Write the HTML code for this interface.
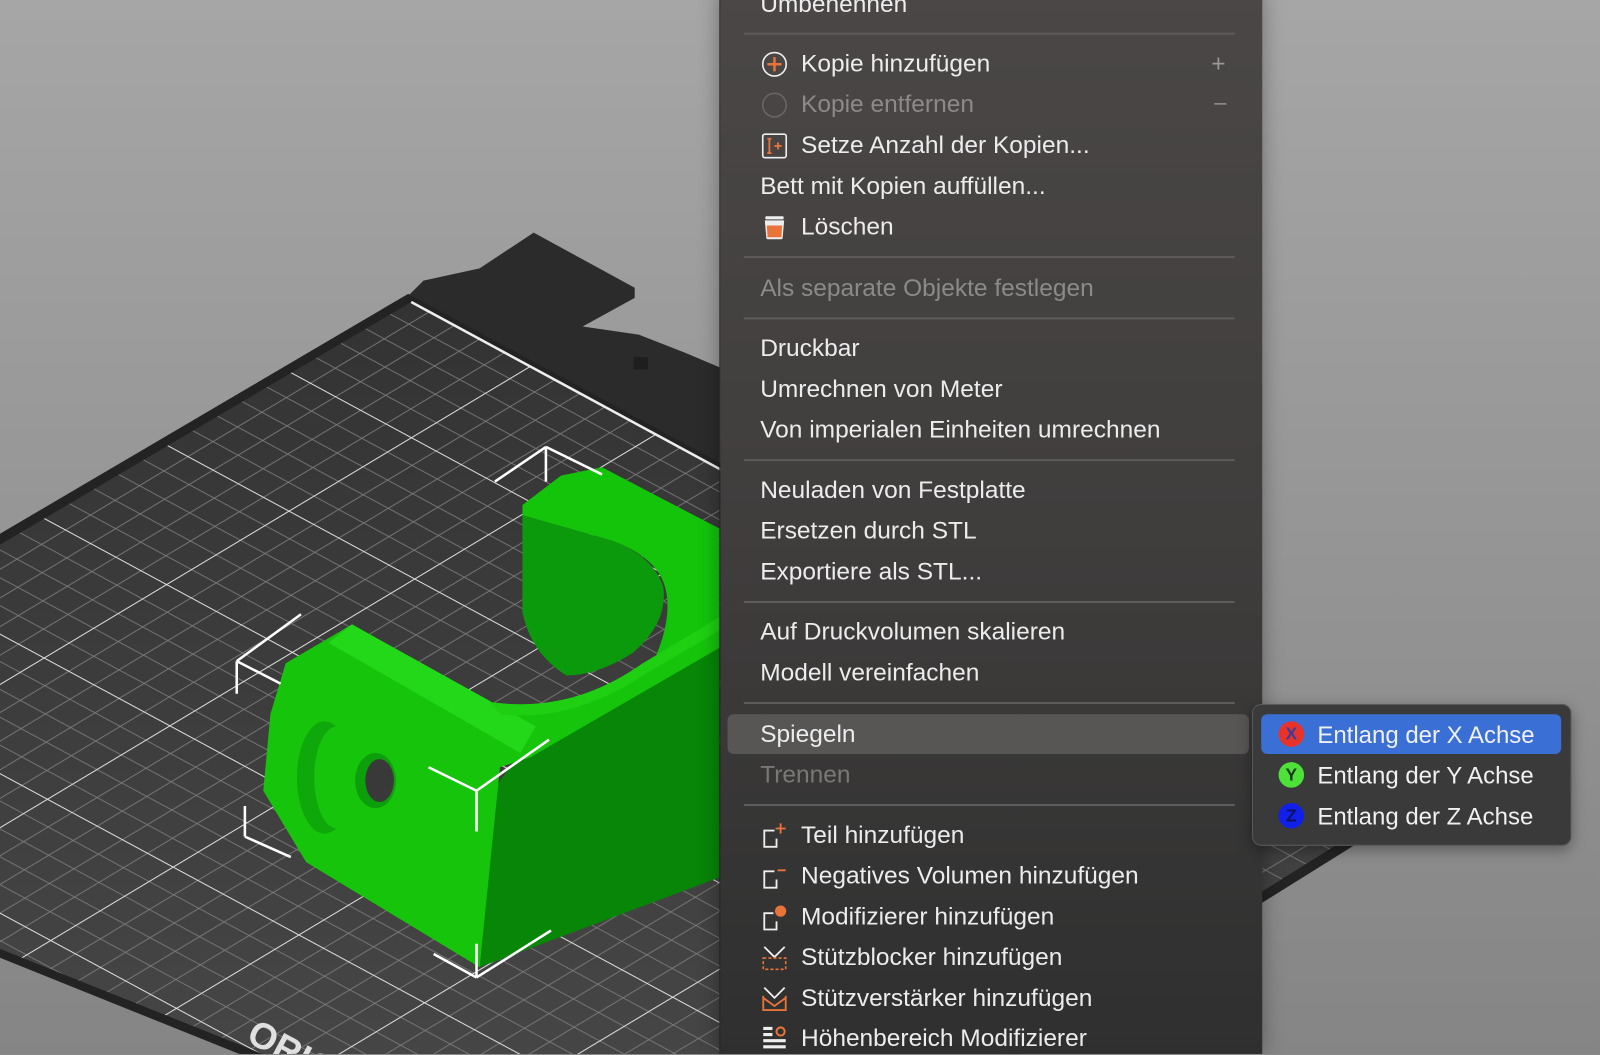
<!DOCTYPE html>
<html><head><meta charset="utf-8"><style>
html,body{margin:0;padding:0;width:1600px;height:1055px;overflow:hidden;background:#8a8a8a;}
#s{position:absolute;left:0;top:0;width:1568px;height:1033px;overflow:hidden;transform:scale(1.0204,1.0203);transform-origin:0 0;font-family:"Liberation Sans",sans-serif;}
.menu{position:absolute;left:705px;top:-10px;width:531px;height:1043px;background:linear-gradient(#4a4746,#403e3d 50%,#2f2f2f);border-left:1px solid #222;box-shadow:0 0 20px rgba(0,0,0,.35);}
.it{position:absolute;left:745px;height:40px;line-height:40px;font-size:24px;color:#ececec;white-space:nowrap;}
.it.i{left:785px}
.dis{color:#8c8a89}
.sep{position:absolute;left:729px;width:481px;height:2px;background:#5e5c5b;}
.ic{position:absolute;left:746px;width:26px;height:26px;}
.sub{position:absolute;left:1227px;top:690px;width:311px;height:137px;background:#3b3a3a;border:1px solid #5a5858;border-radius:9px;box-shadow:0 4px 14px rgba(0,0,0,.35);}
.si{position:absolute;left:1291px;height:40px;line-height:40px;font-size:23.5px;color:#f0f0f0;white-space:nowrap;}
.dot{position:absolute;left:1253px;width:25px;height:25px;border-radius:50%;text-align:center;line-height:25px;font-size:17px;font-weight:bold;}
</style></head><body><div id="s">
<svg width="1568" height="1033" style="position:absolute;left:0;top:0">
<defs>
<linearGradient id="bg" x1="0" y1="0" x2="0" y2="1"><stop offset="0" stop-color="#a6a6a6"/><stop offset="1" stop-color="#858585"/></linearGradient>
<linearGradient id="bed" x1="0" y1="0" x2="0" y2="1"><stop offset="0" stop-color="#333"/><stop offset="1" stop-color="#4a4a4a"/></linearGradient>
<pattern id="g" width="140" height="140" patternUnits="userSpaceOnUse" patternTransform="matrix(0.880,0.475,-0.857,0.514,400,290)">
<g stroke="#7c7c7c" stroke-width="1"><path d="M28 0V140M56 0V140M84 0V140M112 0V140M0 28H140M0 56H140M0 84H140M0 112H140"/></g>
<g stroke="#e6e6e6" stroke-width="2.2"><path d="M0 0V140M0 0H140"/></g>
</pattern>
<clipPath id="bc"><polygon points="403,296 1345,806 700,1210 -400,770"/></clipPath>
</defs>
<rect width="1568" height="1033" fill="url(#bg)"/>
<polygon points="415,275 470,263 523,228 622,282 622,292 571,320 626,328 672,346 705,360 705,480 400,290" fill="#2b2b2b"/>
<rect x="621" y="350" width="14" height="12" fill="#1e1e1e"/>
<polygon points="400,288 1360,808 700,1220 -420,770" fill="#232323"/>
<polygon points="403,296 1345,806 700,1210 -400,770" fill="url(#bed)"/>
<rect x="-500" y="200" width="2000" height="1100" fill="url(#g)" clip-path="url(#bc)"/>
<path d="M403,296 L1345,806" stroke="#eee" stroke-width="2.5"/>
<path d="M512,495 L550,466 L590,458 L705,518 L705,612 L640,650 Q662,600 650,570 Q640,545 600,530 L512,505Z" fill="#13c40b"/>
<path d="M512,505 L600,530 Q640,545 650,575 Q655,610 620,640 Q585,662 555,662 Q520,640 512,600Z" fill="#0b9a0b"/>
<path d="M515,730 L705,612 L705,860 L470,948 L480,780Z" fill="#078607"/>
<path d="M280,650 L345,612 L480,688 Q560,700 630,650 L705,612 L705,635 L520,742 L490,752 L470,948 L300,845 L258,775 L265,700Z" fill="#16c40c"/>
<path d="M322,630 L345,612 L525,712 L510,738 Z" fill="#22d818"/>
<path d="M480,688 Q560,700 630,650 L705,605 L705,618 L630,662 Q560,708 490,700Z" fill="#1fd012"/>
<ellipse cx="318" cy="762" rx="27" ry="55" fill="#0fa80b"/>
<ellipse cx="330" cy="762" rx="22" ry="50" fill="#16c40c"/>
<ellipse cx="368" cy="765" rx="20" ry="27" fill="#0d9e0b"/>
<ellipse cx="372" cy="765" rx="14" ry="21" fill="#393939"/>
<g stroke="#fff" stroke-width="2.5" fill="none">
<path d="M535,438V472M535,438L485,472M535,438L590,465"/>
<path d="M232,648V680M232,648L295,602M232,648L275,670"/>
<path d="M467,775V815M467,775L420,752M467,775L538,725"/>
<path d="M240,790V820M240,820L285,840"/>
<path d="M467,925V958M467,958L425,935M467,958L540,912"/>
</g>
<text x="240" y="1020" fill="#e0e0e0" font-family="Liberation Sans" font-size="36" font-weight="bold" transform="rotate(28 240 1020)">ORIGINAL</text>
</svg>
<div class="menu"></div>
<div class="it" style="top:-15px">Umbenennen</div>
<div class="sep" style="top:32px"></div>
<svg class="ic" style="top:50px" viewBox="0 0 26 26"><circle cx="13" cy="13" r="11.5" fill="none" stroke="#eee" stroke-width="1.6"/><path d="M13 6V20M6 13H20" stroke="#e8743a" stroke-width="2.4"/></svg>
<div class="it i" style="top:43px">Kopie hinzufügen</div>
<div class="it" style="top:43px;left:1187px;color:#999">+</div>
<svg class="ic" style="top:90px" viewBox="0 0 26 26"><circle cx="13" cy="13" r="11.5" fill="none" stroke="#666" stroke-width="1.6"/></svg>
<div class="it i dis" style="top:83px">Kopie entfernen</div>
<div class="it" style="top:83px;left:1189px;color:#888">−</div>
<svg class="ic" style="top:130px" viewBox="0 0 26 26"><rect x="1.5" y="1.5" width="23" height="23" rx="2" fill="none" stroke="#eee" stroke-width="1.6"/><path d="M6 6H10M8 6V20M6 20H10M13 13H20M16.5 9.5V16.5" stroke="#e8743a" stroke-width="1.8"/></svg>
<div class="it i" style="top:123px">Setze Anzahl der Kopien...</div>
<div class="it" style="top:163px">Bett mit Kopien auffüllen...</div>
<svg class="ic" style="top:210px" viewBox="0 0 26 26"><rect x="4" y="2" width="18" height="3" rx="1" fill="#eee"/><path d="M3.5 6H22.5L21 23Q21 24.5 19.5 24.5H6.5Q5 24.5 5 23Z" fill="#eee"/><path d="M5.5 11H20.5L19.8 22.5H6.2Z" fill="#e8743a"/></svg>
<div class="it i" style="top:203px">Löschen</div>
<div class="sep" style="top:251px"></div>
<div class="it dis" style="top:263px">Als separate Objekte festlegen</div>
<div class="sep" style="top:311px"></div>
<div class="it" style="top:322px">Druckbar</div>
<div class="it" style="top:362px">Umrechnen von Meter</div>
<div class="it" style="top:402px">Von imperialen Einheiten umrechnen</div>
<div class="sep" style="top:450px"></div>
<div class="it" style="top:461px">Neuladen von Festplatte</div>
<div class="it" style="top:501px">Ersetzen durch STL</div>
<div class="it" style="top:541px">Exportiere als STL...</div>
<div class="sep" style="top:589px"></div>
<div class="it" style="top:600px">Auf Druckvolumen skalieren</div>
<div class="it" style="top:640px">Modell vereinfachen</div>
<div class="sep" style="top:688px"></div>
<div style="position:absolute;left:713px;top:700px;width:511px;height:39px;border-radius:6px;background:#575655"></div>
<div class="it" style="top:700px">Spiegeln</div>
<div class="it dis" style="top:740px;color:#7a7877">Trennen</div>
<div class="sep" style="top:788px"></div>
<svg class="ic" style="top:806px" viewBox="0 0 26 26"><path d="M13 8H3V24H15V16" fill="none" stroke="#eee" stroke-width="1.8"/><path d="M19 1V11M14 6H24" stroke="#e8743a" stroke-width="1.8"/></svg>
<div class="it i" style="top:799px">Teil hinzufügen</div>
<svg class="ic" style="top:846px" viewBox="0 0 26 26"><path d="M13 8H3V24H15V16" fill="none" stroke="#eee" stroke-width="1.8"/><path d="M16 7H24" stroke="#e8743a" stroke-width="1.8"/></svg>
<div class="it i" style="top:839px">Negatives Volumen hinzufügen</div>
<svg class="ic" style="top:886px" viewBox="0 0 26 26"><path d="M12 9H3V25H15V17" fill="none" stroke="#eee" stroke-width="1.8"/><circle cx="19" cy="7" r="5.5" fill="#e8743a"/></svg>
<div class="it i" style="top:879px">Modifizierer hinzufügen</div>
<svg class="ic" style="top:926px" viewBox="0 0 26 26"><path d="M3 2L13 12L23 2" fill="none" stroke="#eee" stroke-width="1.8"/><rect x="2" y="13" width="22" height="11" fill="none" stroke="#e8743a" stroke-width="1.6" stroke-dasharray="3 2"/></svg>
<div class="it i" style="top:919px">Stützblocker hinzufügen</div>
<svg class="ic" style="top:966px" viewBox="0 0 26 26"><path d="M3 2L13 12L23 2" fill="none" stroke="#eee" stroke-width="1.8"/><path d="M2 10V24H24V10M2 12L13 20L24 12" fill="none" stroke="#e8743a" stroke-width="1.8"/></svg>
<div class="it i" style="top:959px">Stützverstärker hinzufügen</div>
<svg class="ic" style="top:1005px" viewBox="0 0 26 26"><path d="M2 3H11M2 9H11M2 15H24M2 21H24" stroke="#eee" stroke-width="3"/><circle cx="19" cy="6" r="4" fill="none" stroke="#e8743a" stroke-width="2"/></svg>
<div class="it i" style="top:998px;height:35px;line-height:40px;overflow:hidden">Höhenbereich Modifizierer</div>
<div class="sub"></div>
<div style="position:absolute;left:1236px;top:700px;width:294px;height:39px;border-radius:6px;background:#3a6fd6"></div>
<div class="dot" style="top:707px;background:#e8332a;color:#3a3aa0">X</div>
<div class="si" style="top:700px">Entlang der X Achse</div>
<div class="dot" style="top:747px;background:#4ee13a;color:#163a16">Y</div>
<div class="si" style="top:740px">Entlang der Y Achse</div>
<div class="dot" style="top:787px;background:#1020e8;color:#101060">Z</div>
<div class="si" style="top:780px">Entlang der Z Achse</div>
</div></body></html>
